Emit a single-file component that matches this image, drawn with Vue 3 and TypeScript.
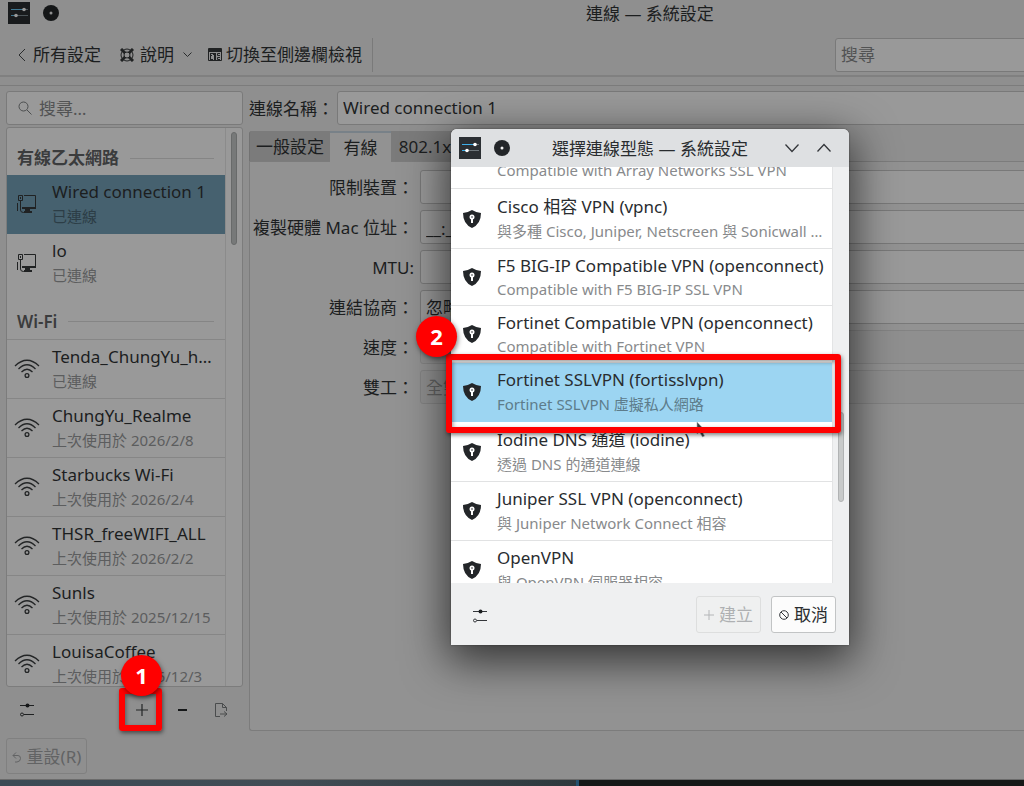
<script setup lang="ts">
import { ref } from 'vue'

interface Connection {
  name: string
  status: string
}

interface VpnType {
  name: string
  detail: string
  cjkName?: boolean
  cjkDetail?: boolean
}

const wired: Connection[] = [
  { name: 'Wired connection 1', status: '已連線' },
  { name: 'lo', status: '已連線' },
]

const wifi: Connection[] = [
  { name: 'Tenda_ChungYu_h…', status: '已連線' },
  { name: 'ChungYu_Realme', status: '上次使用於 2026/2/8' },
  { name: 'Starbucks Wi-Fi', status: '上次使用於 2026/2/4' },
  { name: 'THSR_freeWIFI_ALL', status: '上次使用於 2026/2/2' },
  { name: 'Sunls', status: '上次使用於 2025/12/15' },
  { name: 'LouisaCoffee', status: '上次使用於 2025/12/3' },
]

const vpnTypes: VpnType[] = [
  { name: 'Array Networks SSL VPN (openconnect)', detail: 'Compatible with Array Networks SSL VPN' },
  { name: 'Cisco 相容 VPN (vpnc)', detail: '與多種 Cisco, Juniper, Netscreen 與 Sonicwall …', cjkName: true, cjkDetail: true },
  { name: 'F5 BIG-IP Compatible VPN (openconnect)', detail: 'Compatible with F5 BIG-IP SSL VPN' },
  { name: 'Fortinet Compatible VPN (openconnect)', detail: 'Compatible with Fortinet VPN' },
  { name: 'Fortinet SSLVPN (fortisslvpn)', detail: 'Fortinet SSLVPN 虛擬私人網路', cjkDetail: true },
  { name: 'Iodine DNS 通道 (iodine)', detail: '透過 DNS 的通道連線', cjkName: true, cjkDetail: true },
  { name: 'Juniper SSL VPN (openconnect)', detail: '與 Juniper Network Connect 相容', cjkDetail: true },
  { name: 'OpenVPN', detail: '與 OpenVPN 伺服器相容', cjkDetail: true },
]

const selectedConnection = ref('Wired connection 1')
const selectedType = ref('Fortinet SSLVPN (fortisslvpn)')
const connectionName = ref('Wired connection 1')
const mac = ref('__:__:__:__:__:__')
</script>

<template>
  <div class="screen">
    <div class="window">
      <header class="titlebar">
        <svg class="app-icon" viewBox="0 0 22 22" aria-hidden="true">
          <rect width="22" height="22" fill="#191b1d" />
          <rect x="3" y="7" width="17" height="1" fill="#4b5357" />
          <rect x="3" y="7" width="12" height="1" fill="#3f7791" />
          <rect x="3" y="13" width="17" height="1" fill="#4b5357" />
          <rect x="3" y="13" width="4" height="1" fill="#3f7791" />
          <circle cx="16" cy="7.500" r="1.800" fill="#999" />
          <circle cx="8" cy="13.500" r="1.800" fill="#999" />
        </svg>
        <svg class="pin" viewBox="0 0 16 16" aria-hidden="true">
          <circle cx="8" cy="8" r="8" fill="#151718" />
          <circle cx="8" cy="8" r="1.500" fill="#909090" />
        </svg>
        <h1>連線 — 系統設定</h1>
      </header>

      <nav class="toolbar">
        <button class="tool back" type="button">
          <svg width="9" height="14" viewBox="0 0 9 14"><path d="M8 1 2 7l6 6" fill="none" stroke="#2a2c2d" /></svg>
          所有設定
        </button>
        <button class="tool help" type="button">
          <svg width="14" height="14" viewBox="0 0 14 14">
            <circle cx="7" cy="7" r="6" fill="none" stroke="#202223" />
            <circle cx="7" cy="7" r="3" fill="none" stroke="#202223" />
            <path d="M1 1l4 4M13 1l-4 4M1 13l4-4M13 13l-4-4" stroke="#202223" stroke-width="3" />
          </svg>
          說明
          <svg class="caret" width="9" height="6" viewBox="0 0 9 6"><path d="m.5.500 4 4 4-4" fill="none" stroke="#2a2c2d" /></svg>
        </button>
        <button class="tool view" type="button">
          <svg width="14" height="14" viewBox="0 0 14 14">
            <path d="M.5.500h13v12h-13z" fill="none" stroke="#202223" />
            <path d="M1 1h12v3H1zM2 5h3v1H3v1h1v1H3v3h2v1H2zM5 5h3v7H6V7H5z" fill="#202223" />
            <path d="M12 5.500H9.500v2H12M12 9.500H9.500v2H12" fill="none" stroke="#202223" />
          </svg>
          切換至側邊欄檢視
        </button>
        <span class="divider"></span>
        <input class="field top-search" type="search" placeholder="搜尋" aria-label="搜尋設定" />
      </nav>

      <main class="workspace">
        <aside class="sidebar">
          <label class="search-box">
            <svg width="14" height="14" viewBox="0 0 14 14"><circle cx="5.500" cy="5.500" r="4.500" fill="none" stroke="#4c4e4f" /><path d="m9 9 4.500 4.500" stroke="#4c4e4f" /></svg>
            <input type="search" placeholder="搜尋…" aria-label="搜尋連線" />
          </label>

          <div class="list-frame">
            <div class="connections">
              <h2><span>有線乙太網路</span></h2>
              <button
                v-for="c in wired"
                :key="c.name"
                type="button"
                class="connection"
                :class="{ selected: c.name === selectedConnection }"
                @click="selectedConnection = c.name"
              >
                <svg width="20" height="20" viewBox="0 0 20 20">
                  <path d="M7 1.500h11.500v13H6.500" fill="none" stroke="#202223" />
                  <path d="M5 13h14v2H5zM8 15h5v2h2v2H7v-2h1z" fill="#202223" />
                  <path d="M1.500 1.500h4v5h-4zM3.500 3v2M.5 9v8M3.500 7v9q0 2.500 3 2.500h2" fill="none" stroke="#202223" />
                </svg>
                <span class="texts"><b>{{ c.name }}</b><small>{{ c.status }}</small></span>
              </button>
              <h2 class="wifi-heading"><span>Wi-Fi</span></h2>
              <button
                v-for="c in wifi"
                :key="c.name"
                type="button"
                class="connection wireless"
                :class="{ selected: c.name === selectedConnection }"
                @click="selectedConnection = c.name"
              >
                <svg width="26" height="20" viewBox="0 0 26 20">
                  <g fill="none" stroke="#232526" stroke-width="1.300">
                    <path d="M1 7Q13-4.500 25 7M4.500 10Q13 1.500 21.500 10M7.500 13Q13 7.500 18.500 13" />
                    <circle cx="13" cy="16.500" r="1.900" />
                  </g>
                </svg>
                <span class="texts"><b>{{ c.name }}</b><small>{{ c.status }}</small></span>
              </button>
            </div>
            <div class="track"><span class="thumb"></span></div>
          </div>

          <div class="actions">
            <button type="button" aria-label="設定">
              <svg width="14" height="14" viewBox="0 0 14 14"><path d="M0 2.500h14M4 11.500h10" stroke="#1e2021" /><circle cx="7.500" cy="2.500" r="2" fill="#151718" /><circle cx="2" cy="11.500" r="1.500" fill="none" stroke="#1e2021" /></svg>
            </button>
            <span class="spacer"></span>
            <button type="button" aria-label="新增連線">
              <svg width="12" height="12" viewBox="0 0 12 12"><path d="M6 0v12M0 6h12" stroke="#242627" stroke-width="1.200" /></svg>
            </button>
            <button type="button" aria-label="移除連線">
              <svg width="12" height="12" viewBox="0 0 12 12"><path d="M2 6h9" stroke="#151718" stroke-width="2" /></svg>
            </button>
            <button type="button" aria-label="匯出連線">
              <svg width="14" height="14" viewBox="0 0 14 14"><path d="M6 13.500H1.500V.5h7l4 4V8M8.500.500v4h4M6 11h7m-3-2.500 3 2.500-3 2.500" fill="none" stroke="#4a4c4d" /></svg>
            </button>
          </div>

          <button class="reset" type="button" disabled>
            <svg width="10" height="11" viewBox="0 0 10 11"><path d="M4 .5 1 3.500l3 3M1 3.500h5q2.500 0 2.500 3T5 10H3" fill="none" stroke="#626364" /></svg>
            重設(R)
          </button>
        </aside>

        <section class="editor">
          <div class="name-row">
            <label for="conn-name">連線名稱：</label>
            <input id="conn-name" v-model="connectionName" class="field" type="text" />
          </div>
          <div class="tabs" role="tablist">
            <button type="button" role="tab" class="general">一般設定</button>
            <button type="button" role="tab" class="active" aria-selected="true">有線</button>
            <button type="button" role="tab" class="security">802.1x</button>
          </div>
          <div class="tab-page">
            <label for="device">限制裝置：</label>
            <input id="device" class="field" type="text" />
            <label for="mac">複製硬體 Mac 位址：</label>
            <input id="mac" v-model="mac" class="field" type="text" />
            <label for="mtu">MTU:</label>
            <input id="mtu" class="field" type="text" />
            <label for="negotiation">連結協商：</label>
            <select id="negotiation" class="field"><option>忽略</option></select>
            <label for="speed">速度：</label>
            <input id="speed" class="field" type="text" disabled />
            <label for="duplex">雙工：</label>
            <select id="duplex" class="field" disabled><option>全雙工</option></select>
          </div>
        </section>
      </main>
    </div>
    <footer class="desktop"><span class="wallpaper"></span><span class="panel"></span></footer>

    <section class="dialog" role="dialog" aria-labelledby="dialog-title">
      <header class="dialog-title">
        <svg class="app-icon" viewBox="0 0 22 22" aria-hidden="true">
          <rect width="22" height="22" fill="#2b2f33" />
          <rect x="3" y="7" width="17" height="1" fill="#6d757a" />
          <rect x="3" y="7" width="12" height="1" fill="#3daee9" />
          <rect x="3" y="13" width="17" height="1" fill="#6d757a" />
          <rect x="3" y="13" width="4" height="1" fill="#3daee9" />
          <circle cx="16" cy="7.500" r="1.800" fill="#fff" />
          <circle cx="8" cy="13.500" r="1.800" fill="#fff" />
        </svg>
        <svg class="pin" viewBox="0 0 16 16" aria-hidden="true">
          <circle cx="8" cy="8" r="8" fill="#232629" />
          <circle cx="8" cy="8" r="1.500" fill="#f4f4f4" />
        </svg>
        <h2 id="dialog-title">選擇連線型態 — 系統設定</h2>
        <button type="button" aria-label="最小化"><svg width="16" height="10" viewBox="0 0 16 10"><path d="m1.500 1.500 6.500 7 6.500-7" fill="none" stroke="#33363a" stroke-width="1.300" /></svg></button>
        <button type="button" aria-label="最大化"><svg width="16" height="10" viewBox="0 0 16 10"><path d="m1.500 8.500 6.500-7 6.500 7" fill="none" stroke="#33363a" stroke-width="1.300" /></svg></button>
      </header>
      <div class="dialog-body">
        <div class="types">
          <button
            v-for="t in vpnTypes"
            :key="t.name"
            type="button"
            class="type"
            :class="{ chosen: t.name === selectedType }"
            @click="selectedType = t.name"
          >
            <svg width="18" height="18" viewBox="0 0 18 18">
              <path d="M9 0Q13 2.500 18 3q0 11-9 15Q0 14 0 3 5 2.500 9 0Z" fill="#232629" />
              <circle cx="9" cy="7" r="2.500" fill="#fff" />
              <path d="M8 8h2v5H8z" fill="#fff" />
              <circle cx="9" cy="7" r=".8" fill="#232629" />
            </svg>
            <span class="texts">
              <b :class="{ cjk: t.cjkName }">{{ t.name }}</b>
              <small :class="{ cjk: t.cjkDetail }">{{ t.detail }}</small>
            </span>
          </button>
        </div>
        <div class="dialog-track"><span class="dialog-thumb"></span></div>
      </div>
      <footer class="dialog-footer">
        <button class="icon-button" type="button" aria-label="設定">
          <svg width="14" height="14" viewBox="0 0 14 14"><path d="M0 2.500h14M4 11.500h10" stroke="#33363a" /><circle cx="7.500" cy="2.500" r="2" fill="#1b1e20" /><circle cx="2" cy="11.500" r="1.500" fill="none" stroke="#33363a" /></svg>
        </button>
        <span class="spacer"></span>
        <button class="push" type="button" disabled>
          <svg width="10" height="10" viewBox="0 0 10 10"><path d="M5 0v10M0 5h10" stroke="#b4b6b8" /></svg>
          建立
        </button>
        <button class="push" type="button">
          <svg width="10" height="10" viewBox="0 0 10 10"><circle cx="5" cy="5" r="4.300" fill="none" stroke="#33363a" /><path d="m2 2 6 6" stroke="#33363a" /></svg>
          取消
        </button>
      </footer>
    </section>

    <svg class="pointer" width="10" height="17" viewBox="0 0 10 17" aria-hidden="true">
      <path d="M1 1v12l2.500-2 3 5 2-1-2.500-5h3.500z" fill="#3b3f42" stroke="#aab4b9" stroke-width=".6" />
    </svg>
    <span class="mark add-mark"></span>
    <span class="step step-one">1</span>
    <span class="mark type-mark"></span>
    <span class="step step-two">2</span>
  </div>
</template>

<style>
body {
  margin: 0;
  background: #8f8f8f;
}
</style>

<style scoped>
.screen {
  position: relative;
  display: flex;
  flex-direction: column;
  min-height: 100vh;
  overflow: hidden;
  font-family: "Noto Sans", "Noto Sans CJK TC", sans-serif;
  font-size: 17px;
  line-height: 24px;
  color: #1c1e1f;
}

.screen *,
.screen *::before,
.screen *::after {
  box-sizing: border-box;
}

button,
input,
select {
  font: inherit;
  color: inherit;
  margin: 0;
}

button {
  padding: 0;
  border: 0;
  background: none;
  white-space: nowrap;
}

h1,
h2 {
  margin: 0;
  font-size: 17px;
  font-weight: 400;
}

svg {
  display: block;
  flex: none;
}

.spacer {
  flex: 1;
}

.window {
  flex: 1;
  display: flex;
  flex-direction: column;
  background: #8f8f8f;
  border-bottom: 1px solid #6b6b6b;
}

.titlebar {
  display: flex;
  align-items: center;
  height: 26px;
  padding-left: 8px;
}

.app-icon {
  width: 22px;
  height: 22px;
}

.pin {
  width: 16px;
  height: 16px;
  margin-left: 13px;
}

.titlebar h1 {
  margin-left: 527px;
  padding-top: 2px;
  white-space: nowrap;
}

.toolbar {
  display: flex;
  align-items: center;
  height: 51px;
  padding: 8px 0 0 17px;
  border-bottom: 2px solid #808080;
}

.toolbar > * {
  flex: none;
}

.tool {
  display: flex;
  align-items: center;
  gap: 6px;
}

.back {
  gap: 7px;
  width: 103px;
}

.help {
  width: 88px;
}

.caret {
  margin-left: 3px;
}

.view {
  gap: 4px;
  width: 157px;
}

.divider {
  width: 1px;
  height: 34px;
  margin-left: 7px;
  background: #7a7a7a;
}

.field {
  min-width: 0;
  height: 34px;
  padding: 0 5px;
  border: 1px solid #797979;
  border-radius: 3px;
  background: #999;
  outline: 0;
  appearance: none;
}

.field:disabled {
  background: #8f8f8f;
  border-color: #838383;
  color: #626262;
  opacity: 1;
}

input::placeholder {
  color: #525354;
  opacity: 1;
}

.toolbar .top-search {
  flex: 1;
  margin: 0 -4px 0 auto;
  max-width: 193px;
}

.workspace {
  flex: 1;
  display: flex;
  margin-top: 8px;
  padding: 5px 0 0 6px;
  border-top: 1px solid #7c7c7c;
}

.sidebar {
  flex: none;
  display: flex;
  flex-direction: column;
  width: 237px;
}

.search-box {
  display: flex;
  align-items: center;
  gap: 7px;
  height: 34px;
  padding-left: 11px;
  border: 1px solid #7a7a7a;
  border-radius: 3px;
  background: #999;
}

.search-box input {
  flex: 1;
  min-width: 0;
  padding: 2px 0 0;
  border: 0;
  outline: 0;
  background: none;
  appearance: none;
}

.list-frame {
  flex: 1 1 0;
  display: flex;
  min-height: 0;
  margin-top: 2px;
  overflow: hidden;
  border: 1px solid #7c7c7c;
  border-radius: 3px;
  background: #999;
}

.connections {
  flex: 1;
  min-width: 0;
  border-right: 1px solid #8b8b8b;
}

.connections h2 {
  display: flex;
  align-items: center;
  gap: 11px;
  height: 47px;
  padding: 13px 11px 0 10px;
  font-weight: 600;
  color: #3b3c3d;
}

.connections h2::after {
  content: "";
  flex: 1;
  height: 1px;
  background: #858585;
}

.connections .wifi-heading {
  height: 46px;
  padding-top: 11px;
}

.connection {
  display: flex;
  align-items: center;
  gap: 15px;
  width: 100%;
  height: 59px;
  padding: 0 0 1px 10px;
  text-align: left;
}

.connection.wireless {
  gap: 12px;
  padding-left: 7px;
  border-top: 1px solid #868686;
}

.connection.selected {
  background: #46616f;
}

.texts {
  display: flex;
  flex-direction: column;
  min-width: 0;
}

.texts b {
  font-weight: 400;
}

.texts small {
  font-size: 15px;
  color: #5c5d5e;
}

.connection.selected small {
  color: #2c3d46;
}

.track {
  width: 16px;
  padding: 4px 5px 0;
}

.thumb {
  display: block;
  height: 113px;
  border: 1px solid #686a6a;
  border-radius: 3px;
  background: #777979;
}

.actions {
  display: flex;
  align-items: center;
  height: 47px;
  padding: 0 15px 2px 14px;
}

.actions button + button {
  margin-left: 28px;
}

.actions button:last-child {
  margin-left: 26px;
}

.reset {
  display: flex;
  align-items: center;
  justify-content: center;
  gap: 5px;
  align-self: flex-start;
  width: 81px;
  height: 36px;
  margin: 4px 0 5px;
  padding-top: 2px;
  border: 1px solid #808080;
  border-radius: 3px;
  color: #626364;
}

.editor {
  flex: 1;
  display: flex;
  flex-direction: column;
  min-width: 0;
  padding-left: 6px;
}

.name-row {
  display: flex;
  align-items: center;
}

.name-row label {
  flex: none;
  width: 88px;
  padding-top: 2px;
}

.name-row .field {
  flex: 1;
  margin-right: -4px;
  padding-bottom: 2px;
}

.tabs {
  display: flex;
  margin-top: 6px;
  border-bottom: 1px solid #7c7c7c;
}

.tabs button {
  height: 30px;
  padding-top: 2px;
  background: #7b7b7b;
}

.tabs .general {
  width: 81px;
  border-left: 1px solid #727272;
  border-radius: 3px 0 0 0;
}

.tabs .active {
  width: 61px;
  height: 31px;
  margin-bottom: -1px;
  padding-top: 0;
  border-top: 2px solid #788188;
  background: #929292;
}

.tabs .security {
  width: 68px;
}

.tab-page {
  flex: 1;
  display: grid;
  grid-template-columns: 164px 1fr;
  grid-auto-rows: 34px;
  gap: 6px;
  align-items: center;
  padding: 8px 0 0;
  margin-bottom: 48px;
  border: 1px solid #7c7c7c;
  border-width: 0 0 1px 1px;
  border-radius: 0 0 0 3px;
  background: #929292;
}

.tab-page label {
  padding-top: 2px;
  text-align: right;
  white-space: nowrap;
}

.tab-page .field {
  width: calc(100% + 4px);
  padding-top: 2px;
}

.desktop {
  display: flex;
  height: 6px;
}

.wallpaper {
  flex: 576;
  border-right: 3px solid #22516f;
  background: linear-gradient(90deg, #3b4b55, #414d55 50%, #2d393d);
}

.panel {
  flex: 445;
  background: #151817;
}

.dialog {
  position: absolute;
  left: 451px;
  top: 129px;
  width: 398px;
  overflow: hidden;
  border-radius: 6px 6px 0 0;
  background: #eff0f1;
  color: #292c2f;
  box-shadow: 0 0 2px rgba(0, 0, 0, .4), 0 12px 44px 4px rgba(0, 0, 0, .65);
}

.dialog-title {
  display: flex;
  align-items: center;
  height: 38px;
  padding: 0 17px 0 8px;
  background: #dee0e2;
}

.dialog-title h2 {
  flex: 1;
  padding: 2px 0 0 6px;
  text-align: center;
  white-space: nowrap;
}

.dialog-title button + button {
  margin-left: 16px;
}

.dialog-body {
  display: flex;
  height: 416px;
}

.types {
  flex: 1;
  min-width: 0;
  overflow: hidden;
  background: #fff;
}

.type {
  display: flex;
  align-items: center;
  gap: 16px;
  width: 100%;
  padding: 5px 0 5px 12px;
  border-bottom: 1px solid #e1e2e3;
  text-align: left;
}

.type:first-child {
  margin-top: -35px;
  padding: 3px 0 7px 12px;
}

.type small {
  line-height: 22px;
  color: #888a8c;
}

.type b.cjk {
  line-height: 25px;
}

.type small.cjk {
  line-height: 24px;
}

.type.chosen {
  background: #9cd5f2;
  border-bottom-color: #9cd5f2;
}

.type.chosen small {
  color: #5d7c8b;
}

.dialog-track {
  width: 17px;
  padding: 245px 5px 0;
  border-left: 1px solid #e3e4e5;
}

.dialog-thumb {
  display: block;
  height: 90px;
  border: 1px solid #b1b3b4;
  border-radius: 3px;
  background: #c8caca;
}

.dialog-footer {
  display: flex;
  align-items: center;
  gap: 10px;
  height: 62px;
  padding: 0 13px 0 22px;
}

.icon-button {
  padding-top: 4px;
}

.push {
  display: flex;
  align-items: center;
  justify-content: center;
  gap: 5px;
  width: 65px;
  height: 37px;
  padding-top: 2px;
  border: 1px solid #c2c4c5;
  border-radius: 3px;
  background: #fcfcfc;
}

.push:disabled {
  border-color: #dddede;
  background: #eff0f0;
  color: #aeb0b2;
}

.pointer {
  position: absolute;
  left: 696px;
  top: 421px;
}

.mark {
  position: absolute;
  border: 6px solid #f00;
  border-radius: 3px;
  box-shadow: 1px 2px 4px rgba(0, 0, 0, .5), inset 1px 2px 4px rgba(0, 0, 0, .4);
  pointer-events: none;
}

.add-mark {
  left: 119px;
  top: 688px;
  width: 43px;
  height: 43px;
}

.type-mark {
  left: 446px;
  top: 354px;
  width: 395px;
  height: 79px;
}

.step {
  position: absolute;
  width: 41px;
  height: 41px;
  border-radius: 50%;
  background: #f00;
  color: #fff;
  font-size: 22px;
  font-weight: 700;
  line-height: 40px;
  text-align: center;
  box-shadow: 1px 2px 5px rgba(0, 0, 0, .5);
}

.step-one {
  left: 121px;
  top: 655px;
}

.step-two {
  left: 416px;
  top: 316px;
}
</style>
